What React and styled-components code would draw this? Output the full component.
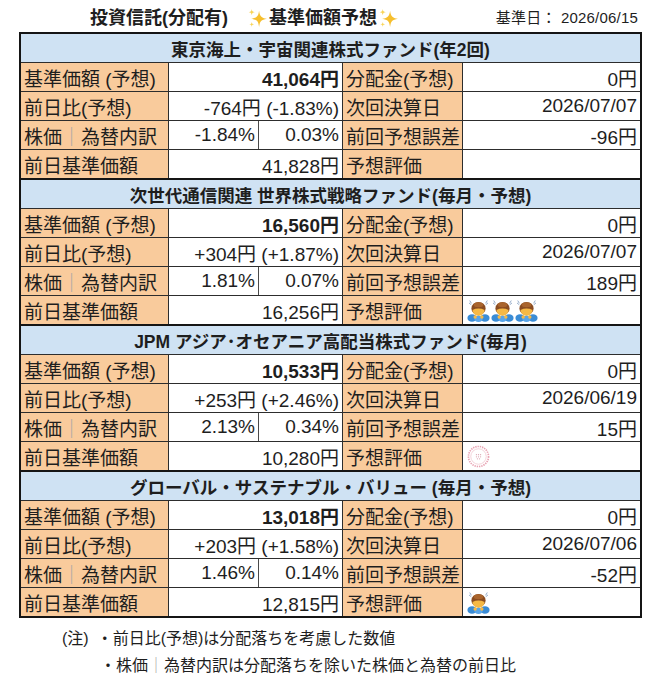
import React from 'react';
import styled, { createGlobalStyle } from 'styled-components';

const funds = [
  {
    name: '東京海上・宇宙関連株式ファンド(年2回)',
    price: '41,064円',
    dividend: '0円',
    change: '-764円 (-1.83%)',
    settle: '2026/07/07',
    stock: '-1.84%',
    fx: '0.03%',
    error: '-96円',
    prev: '41,828円',
    rating: null
  },
  {
    name: '次世代通信関連 世界株式戦略ファンド(毎月・予想)',
    price: '16,560円',
    dividend: '0円',
    change: '+304円 (+1.87%)',
    settle: '2026/07/07',
    stock: '1.81%',
    fx: '0.07%',
    error: '189円',
    prev: '16,256円',
    rating: { kind: 'bow', count: 3 }
  },
  {
    name: 'JPM アジア･オセアニア高配当株式ファンド(毎月)',
    price: '10,533円',
    dividend: '0円',
    change: '+253円 (+2.46%)',
    settle: '2026/06/19',
    stock: '2.13%',
    fx: '0.34%',
    error: '15円',
    prev: '10,280円',
    rating: { kind: 'flower', count: 1 }
  },
  {
    name: 'グローバル・サステナブル・バリュー (毎月・予想)',
    price: '13,018円',
    dividend: '0円',
    change: '+203円 (+1.58%)',
    settle: '2026/07/06',
    stock: '1.46%',
    fx: '0.14%',
    error: '-52円',
    prev: '12,815円',
    rating: { kind: 'bow', count: 1 }
  }
];

const Sparkle = () => (
  <SparkleSvg viewBox="0 0 20 20">
    <path
      d="M11.5 2.5 C12.3 8 13.5 9.2 19 10.2 C13.5 11.2 12.3 12.4 11.5 18 C10.7 12.4 9.5 11.2 4 10.2 C9.5 9.2 10.7 8 11.5 2.5 Z"
      fill="#f6bf2e"
    />
    <path
      d="M4.5 1 C4.8 3.2 5.3 3.7 7.4 4 C5.3 4.3 4.8 4.8 4.5 7 C4.2 4.8 3.7 4.3 1.6 4 C3.7 3.7 4.2 3.2 4.5 1 Z"
      fill="#f8d458"
    />
    <path
      d="M4.5 13 C4.7 14.8 5.1 15.2 6.9 15.5 C5.1 15.8 4.7 16.2 4.5 18 C4.3 16.2 3.9 15.8 2.1 15.5 C3.9 15.2 4.3 14.8 4.5 13 Z"
      fill="#f8d458"
    />
  </SparkleSvg>
);

const Bow = () => (
  <EmojiSvg viewBox="0 0 22 22">
    <path
      d="M2.2 4 L3.8 5.3 M2.8 1.8 L4 3.8 M19.8 4 L18.2 5.3 M19.2 1.8 L18 3.8"
      stroke="#8fa7c6"
      strokeWidth="0.9"
      strokeLinecap="round"
    />
    <ellipse cx="11" cy="9" rx="6.8" ry="6.2" fill="#8a4c21" />
    <ellipse cx="11" cy="5.4" rx="4.6" ry="2.4" fill="#a9642d" />
    <path d="M5.2 10.6 Q11 7.8 16.8 10.6 Q16.5 15.6 11 16.2 Q5.5 15.6 5.2 10.6 Z" fill="#f6b945" />
    <ellipse cx="4.8" cy="18.2" rx="4.4" ry="3.6" fill="#3a8cd6" />
    <ellipse cx="17.2" cy="18.2" rx="4.4" ry="3.6" fill="#3a8cd6" />
    <ellipse cx="11" cy="19" rx="4" ry="3" fill="#5aa5e8" />
    <circle cx="7.8" cy="17.2" r="1.6" fill="#f6b945" />
    <circle cx="14.2" cy="17.2" r="1.6" fill="#f6b945" />
  </EmojiSvg>
);

const Flower = () => (
  <EmojiSvg viewBox="0 0 22 22">
    <circle cx="11" cy="11" r="9.6" fill="#fff" stroke="#e8a3b3" strokeWidth="1.6" strokeDasharray="1.3 0.9" />
    <circle cx="11" cy="11" r="7.4" fill="none" stroke="#f0c4ce" strokeWidth="0.7" />
    <g fill="#d9a5b1">
      <circle cx="9" cy="9.3" r="0.6" />
      <circle cx="11" cy="9.3" r="0.6" />
      <circle cx="13" cy="9.3" r="0.6" />
      <circle cx="9" cy="11.3" r="0.6" />
      <circle cx="11" cy="11.3" r="0.6" />
      <circle cx="13" cy="11.3" r="0.6" />
      <circle cx="10" cy="13.2" r="0.6" />
      <circle cx="12" cy="13.2" r="0.6" />
    </g>
  </EmojiSvg>
);

const Rating = ({ rating }) => {
  if (!rating) return null;
  const items = Array.from({ length: rating.count });
  return (
    <>
      {items.map((_, i) =>
        rating.kind === 'bow' ? <Bow key={i} /> : <Flower key={i} />
      )}
    </>
  );
};

const FundSection = ({ fund, first }) => (
  <Section $first={first}>
    <SectionHeader>{fund.name}</SectionHeader>
    <Row>
      <Label>基準価額 (予想)</Label>
      <Value $bold>{fund.price}</Value>
      <Label>分配金(予想)</Label>
      <Value>{fund.dividend}</Value>
    </Row>
    <Row>
      <Label>前日比(予想)</Label>
      <Value>{fund.change}</Value>
      <Label>次回決算日</Label>
      <Value>{fund.settle}</Value>
    </Row>
    <Row>
      <Label>
        株価<Bar>｜</Bar>為替内訳
      </Label>
      <Split>
        <Value>{fund.stock}</Value>
        <Value>{fund.fx}</Value>
      </Split>
      <Label>前回予想誤差</Label>
      <Value>{fund.error}</Value>
    </Row>
    <Row>
      <Label>前日基準価額</Label>
      <Value>{fund.prev}</Value>
      <Label>予想評価</Label>
      <RatingCell>
        <Rating rating={fund.rating} />
      </RatingCell>
    </Row>
  </Section>
);

export default function App() {
  return (
    <Page>
      <GlobalStyle />
      <TitleBar>
        <Title>
          投資信託(分配有)
          <Highlight>
            <Sparkle />
            基準価額予想
            <Sparkle />
          </Highlight>
        </Title>
        <BaseDate>基準日： 2026/06/15</BaseDate>
      </TitleBar>
      <Table>
        {funds.map((fund, i) => (
          <FundSection key={fund.name} fund={fund} first={i === 0} />
        ))}
      </Table>
      <Notes>
        <NoteLine>
          <NoteTag>(注)</NoteTag>・前日比(予想)は分配落ちを考慮した数値
        </NoteLine>
        <NoteLine $indent>
          ・株価<Bar>｜</Bar>為替内訳は分配落ちを除いた株価と為替の前日比
        </NoteLine>
      </Notes>
    </Page>
  );
}

const GlobalStyle = createGlobalStyle`
  body {
    margin: 0;
    background: #fff;
    font-family: "Liberation Sans", "Noto Sans CJK JP", sans-serif;
    color: #1e1e1e;
  }
`;

const Page = styled.div`
  width: 653px;
  height: 680px;
  background: #fff;
  overflow: hidden;
`;

const TitleBar = styled.div`
  height: 32px;
  display: flex;
  align-items: center;
  justify-content: space-between;
  padding: 0 15px 0 90px;
  box-sizing: border-box;
`;

const Title = styled.div`
  display: flex;
  align-items: center;
  font-size: 18px;
  font-weight: bold;
  line-height: 20px;
  margin-top: 4px;
`;

const Highlight = styled.span`
  display: flex;
  align-items: center;
  margin-left: 18px;
`;

const SparkleSvg = styled.svg`
  width: 21px;
  height: 21px;
  margin: 0 1px;
`;

const BaseDate = styled.div`
  font-size: 15px;
  line-height: 18px;
  margin-top: 4px;
  letter-spacing: 0.2px;
`;

const Table = styled.div`
  margin-left: 19px;
  width: 623px;
  box-sizing: border-box;
  border: 2px solid #151515;
`;

const Section = styled.div`
  border-top: ${({ $first }) => ($first ? 'none' : '2px solid #151515')};
`;

const SectionHeader = styled.div`
  height: 28px;
  background: #cfe2f3;
  display: flex;
  align-items: center;
  justify-content: center;
  font-size: 17.5px;
  font-weight: bold;
  white-space: nowrap;
`;

const Row = styled.div`
  display: grid;
  grid-template-columns: 147px 173px 119px 177px;
  column-gap: 1px;
  height: 28px;
  background: #2d2d2d;
  border-top: 1px solid #2d2d2d;
`;

const Label = styled.div`
  background: #f9cb9c;
  display: flex;
  align-items: center;
  padding-left: 3px;
  font-size: 19px;
  white-space: nowrap;
  overflow: hidden;
`;

const Bar = styled.span`
  color: #a8a8a8;
  font-weight: normal;
`;

const Value = styled.div`
  background: #fff;
  display: flex;
  align-items: center;
  justify-content: flex-end;
  padding-right: 3px;
  font-size: 19px;
  font-weight: ${({ $bold }) => ($bold ? 'bold' : 'normal')};
  white-space: nowrap;
`;

const Split = styled.div`
  display: grid;
  grid-template-columns: 89px 83px;
  column-gap: 1px;
  background: #4a4a4a;
`;

const RatingCell = styled.div`
  background: #fff;
  display: flex;
  align-items: center;
  padding-left: 4px;
  gap: 1px;
`;

const EmojiSvg = styled.svg`
  width: 23px;
  height: 23px;
`;

const Notes = styled.div`
  padding: 7px 0 0 62px;
  font-size: 16px;
  line-height: 27px;
`;

const NoteLine = styled.div`
  padding-left: ${({ $indent }) => ($indent ? '38px' : '0')};
  white-space: nowrap;
`;

const NoteTag = styled.span`
  margin-right: 8px;
`;
